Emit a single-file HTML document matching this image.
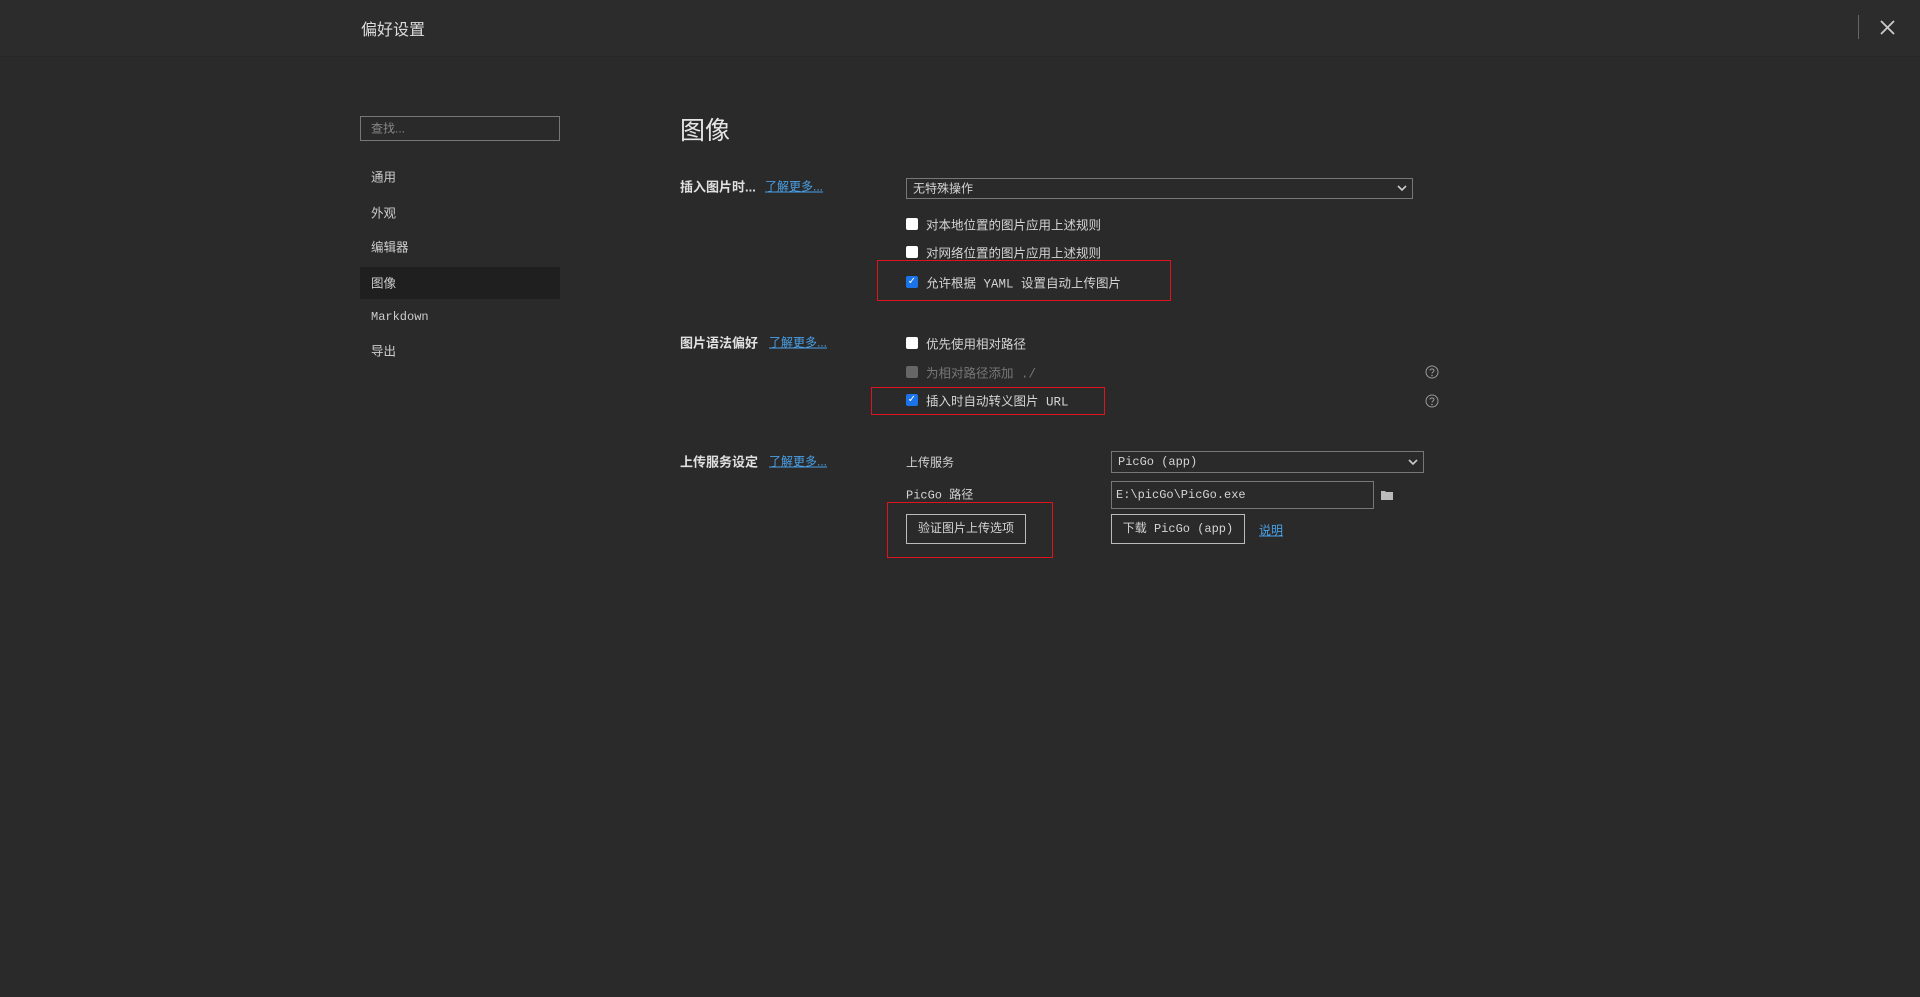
<!DOCTYPE html>
<html><head><meta charset="utf-8"><style>
*{margin:0;padding:0;box-sizing:border-box}
body{width:1920px;height:997px;background:#2a2a2a;position:relative;overflow:hidden;font-family:"Liberation Mono","Noto Sans CJK SC",monospace;color:#d4d4d4;font-size:12.5px}
.a{position:absolute;white-space:nowrap}
.hdr{left:0;top:0;width:1920px;height:57px;background:#2c2c2c;border-bottom:1px solid #272727}
.t{transform:translateY(-50%)}
.lbl{font-family:"Liberation Sans","Noto Sans CJK SC",sans-serif;font-weight:bold;color:#e0e0e0;font-size:13px}
.lnk{color:#4aa0e6;text-decoration:underline;font-family:"Liberation Sans","Noto Sans CJK SC",sans-serif;font-size:12px}
.cb{width:12px;height:12px;background:#fff;border-radius:2px}
.cbk{width:12px;height:12px;background:#1a73e8;border-radius:2px;color:#fff;font-size:10px;line-height:12px;text-align:center;font-family:"DejaVu Sans",sans-serif}
.red{border:1px solid #e0141e}
.box{border:1px solid #777;background:#2a2a2a}
.btn{border:1px solid #bbb;text-align:center;line-height:28px}
.sb{color:#ccc;font-family:"Liberation Sans","Noto Sans CJK SC",sans-serif}
.m{font-size:12px}
</style></head><body>
<div class="a hdr"></div>
<div class="a t" style="left:361px;top:28px;font-size:16px;color:#dcdcdc;font-family:'Liberation Sans','Noto Sans CJK SC',sans-serif">偏好设置</div>
<div class="a" style="left:1858px;top:15px;width:1px;height:24px;background:#666"></div>
<svg class="a" style="left:1880px;top:20px" width="15" height="15" viewBox="0 0 15 15"><path d="M1 1L14 14M14 1L1 14" stroke="#ccc" stroke-width="1.8"/></svg>

<div class="a box" style="left:360px;top:116px;width:200px;height:25px;border-color:#777"></div>
<div class="a t" style="left:371px;top:128px;color:#888;font-size:12px;font-family:'Liberation Sans','Noto Sans CJK SC',sans-serif">查找...</div>
<div class="a" style="left:360px;top:267px;width:200px;height:32px;background:#1f1f1f"></div>
<div class="a t sb" style="left:371px;top:176px">通用</div>
<div class="a t sb" style="left:371px;top:212px">外观</div>
<div class="a t sb" style="left:371px;top:246px">编辑器</div>
<div class="a t sb" style="left:371px;top:282px">图像</div>
<div class="a t m" style="left:371px;top:317px;color:#ccc">Markdown</div>
<div class="a t sb" style="left:371px;top:350px">导出</div>

<div class="a t" style="left:680px;top:129px;font-size:25px;color:#e6e6e6;font-family:'Liberation Sans','Noto Sans CJK SC',sans-serif">图像</div>

<div class="a t lbl" style="left:680px;top:186px">插入图片时...</div>
<div class="a t lnk" style="left:765px;top:186px">了解更多...</div>
<div class="a box" style="left:906px;top:178px;width:507px;height:21px"></div>
<div class="a t" style="left:913px;top:188px;font-size:12px;font-family:'Liberation Sans','Noto Sans CJK SC',sans-serif">无特殊操作</div>
<svg class="a" style="left:1397px;top:184px" width="10" height="8"><path d="M1 2L5 6L9 2" stroke="#ccc" stroke-width="1.6" fill="none"/></svg>

<div class="a cb" style="left:906px;top:218px"></div><div class="a t" style="left:926px;top:224px">对本地位置的图片应用上述规则</div>
<div class="a cb" style="left:906px;top:246px"></div><div class="a t" style="left:926px;top:252px">对网络位置的图片应用上述规则</div>
<div class="a cbk" style="left:906px;top:276px">✓</div><div class="a t" style="left:926px;top:282px">允许根据 YAML 设置自动上传图片</div>
<div class="a red" style="left:877px;top:260px;width:294px;height:41px"></div>

<div class="a t lbl" style="left:680px;top:342px">图片语法偏好</div>
<div class="a t lnk" style="left:769px;top:342px">了解更多...</div>
<div class="a cb" style="left:906px;top:337px"></div><div class="a t" style="left:926px;top:343px">优先使用相对路径</div>
<div class="a cb" style="left:906px;top:366px;background:#666"></div><div class="a t" style="left:926px;top:372px;color:#777">为相对路径添加 ./</div>
<div class="a cbk" style="left:906px;top:394px">✓</div><div class="a t" style="left:926px;top:400px">插入时自动转义图片 URL</div>
<div class="a red" style="left:871px;top:387px;width:234px;height:28px"></div>
<svg class="a" style="left:1425px;top:365px" width="14" height="14" viewBox="0 0 14 14"><circle cx="7" cy="7" r="6" stroke="#999" fill="none"/><path d="M5 5.5C5 3.5 9 3.5 9 5.5C9 7 7 7 7 8.5" stroke="#999" fill="none"/><circle cx="7" cy="10.5" r=".8" fill="#999"/></svg>
<svg class="a" style="left:1425px;top:394px" width="14" height="14" viewBox="0 0 14 14"><circle cx="7" cy="7" r="6" stroke="#999" fill="none"/><path d="M5 5.5C5 3.5 9 3.5 9 5.5C9 7 7 7 7 8.5" stroke="#999" fill="none"/><circle cx="7" cy="10.5" r=".8" fill="#999"/></svg>

<div class="a t lbl" style="left:680px;top:461px">上传服务设定</div>
<div class="a t lnk" style="left:769px;top:461px">了解更多...</div>
<div class="a t" style="left:906px;top:462px;font-size:12px">上传服务</div>
<div class="a box" style="left:1111px;top:451px;width:313px;height:22px"></div>
<div class="a t m" style="left:1118px;top:462px">PicGo (app)</div>
<svg class="a" style="left:1408px;top:458px" width="10" height="8"><path d="M1 2L5 6L9 2" stroke="#ccc" stroke-width="1.6" fill="none"/></svg>
<div class="a t" style="left:906px;top:494px;font-size:12px">PicGo 路径</div>
<div class="a box" style="left:1111px;top:481px;width:263px;height:28px"></div>
<div class="a t m" style="left:1116px;top:495px">E:\picGo\PicGo.exe</div>
<svg class="a" style="left:1381px;top:489px" width="12" height="11"><path d="M0 2h4l1 1h7v8H0z" fill="#bbb"/></svg>
<div class="a btn" style="left:906px;top:514px;width:120px;height:30px;font-size:12px">验证图片上传选项</div>
<div class="a btn m" style="left:1111px;top:514px;width:134px;height:30px">下载 PicGo (app)</div>
<div class="a t lnk" style="left:1259px;top:530px">说明</div>
<div class="a red" style="left:887px;top:502px;width:166px;height:56px"></div>
</body></html>
